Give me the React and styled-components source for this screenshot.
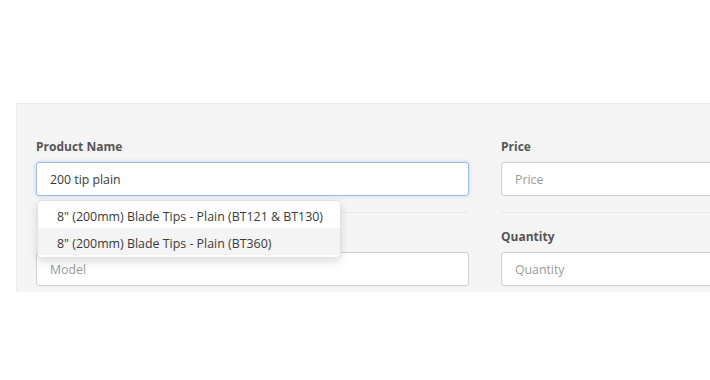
import React from "react";
import styled, { createGlobalStyle, css } from "styled-components";

const GlobalStyle = createGlobalStyle`
  html, body {
    margin: 0;
    padding: 0;
    background: #fff;
    overflow: hidden;
  }
  body {
    font-family: "Open Sans", "Liberation Sans", sans-serif;
  }
`;

const suggestions = [
  "8\" (200mm) Blade Tips - Plain (BT121 & BT130)",
  "8\" (200mm) Blade Tips - Plain (BT360)",
];

const App = () => {
  return (
    <>
      <GlobalStyle />
      <Page>
        <Panel>
          <FormGrid>
            <FormGroup first>
              <Label>Product Name</Label>
              <InputWrap>
                <Input focused defaultValue="200 tip plain" />
                <Dropdown>
                  {suggestions.map((item, i) => (
                    <DropdownItem key={item} active={i === 1}>
                      {item}
                    </DropdownItem>
                  ))}
                </Dropdown>
              </InputWrap>
            </FormGroup>
            <FormGroup first>
              <Label>Price</Label>
              <Input placeholder="Price" />
            </FormGroup>
            <FormGroup>
              {/* label sits under the open suggestion list */}
              <Label hidden>Model</Label>
              <Input placeholder="Model" />
            </FormGroup>
            <FormGroup>
              <Label>Quantity</Label>
              <Input placeholder="Quantity" />
            </FormGroup>
          </FormGrid>
        </Panel>
      </Page>
    </>
  );
};

const Page = styled.div`
  padding: 103px 0 0 16px;
  width: 1000px;
`;

const Panel = styled.div`
  background: #f5f5f5;
  border-top: 1px solid #e8e8e8;
  border-left: 1px solid #ececec;
  padding: 0 0 6px 19px;
  height: 182px;
`;

const FormGrid = styled.div`
  display: grid;
  grid-template-columns: 433px 433px;
  column-gap: 32px;
`;

const FormGroup = styled.div`
  display: flex;
  flex-direction: column;
  ${p => p.first && css`
    padding-top: 34px;
    padding-bottom: 16px;
    border-bottom: 1px solid #e9e9e9;
  `}
  ${p => !p.first && css`
    padding-top: 15px;
  `}
`;

const Label = styled.label`
  display: block;
  font-size: 12px;
  font-weight: 700;
  line-height: 18px;
  color: #555;
  margin-bottom: 6px;
  ${p => p.hidden && css`
    visibility: hidden;
  `}
`;

const InputWrap = styled.div`
  position: relative;
`;

const Input = styled.input`
  box-sizing: border-box;
  width: 100%;
  height: 34px;
  padding: 0 13px;
  border: 1px solid #d2d2d2;
  border-radius: 3px;
  background: #fff;
  font-family: "Open Sans", "Liberation Sans", sans-serif;
  font-size: 12.3px;
  color: #3a3a3a;
  outline: none;

  &::placeholder {
    color: #9a9a9a;
  }

  ${p => p.focused && css`
    border-color: #9dbbe8;
    box-shadow: 0 0 4px rgba(102, 150, 225, 0.35);
  `}
`;

const Dropdown = styled.div`
  position: absolute;
  top: 38px;
  left: 1px;
  width: 304px;
  box-sizing: border-box;
  background: #fff;
  border: 1px solid #e2e2e2;
  border-radius: 4px;
  box-shadow: 0 4px 10px rgba(0, 0, 0, 0.13);
  padding: 0 0 2px;
  z-index: 2;
`;

const DropdownItem = styled.div`
  padding: 6px 19px 2px;
  line-height: 19px;
  font-size: 12.4px;
  color: #3a3a3a;
  white-space: nowrap;
  ${p => p.active && css`
    background: #f4f4f4;
  `}
`;

export default App;
